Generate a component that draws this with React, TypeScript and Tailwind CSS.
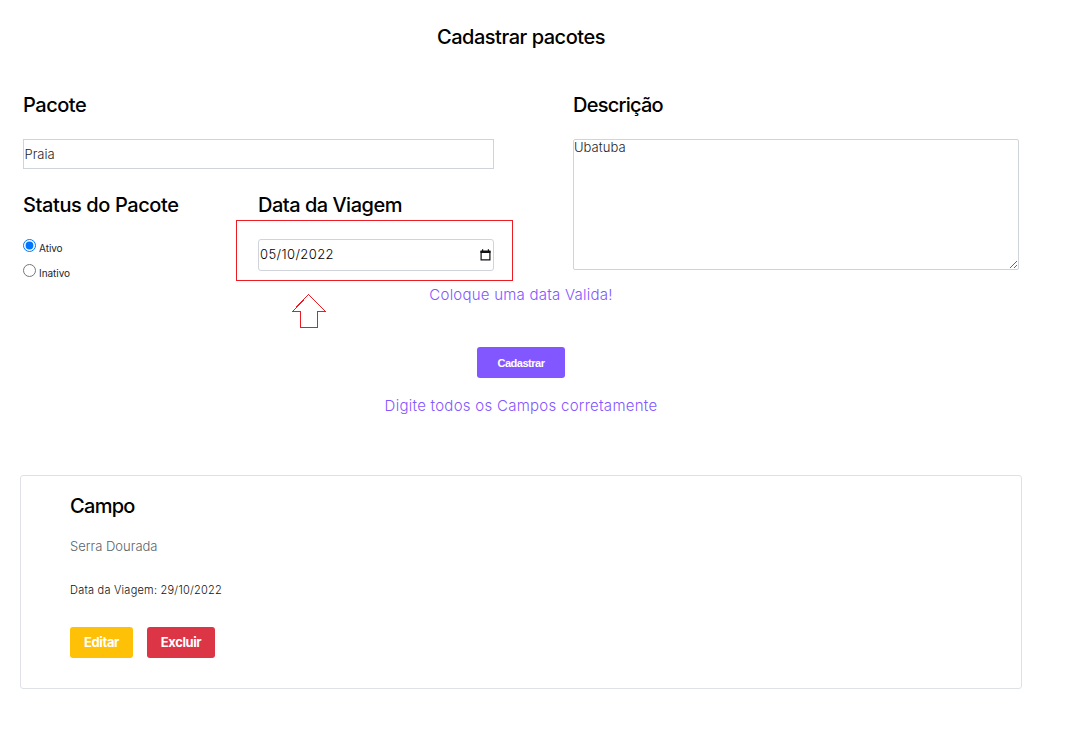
import React from "react";

function Heading({ children, className = "tracking-[-0.47px]" }: { children: React.ReactNode; className?: string }) {
  return (
    <h2 className={`h-[30px] whitespace-nowrap text-[20px] font-medium leading-[30px] text-black ${className}`}>
      {children}
    </h2>
  );
}

function StatusOption({ label, checked }: { label: string; checked?: boolean }) {
  return (
    <label className="flex h-[25px] items-start text-[10px] leading-[18px] text-[#212529]">
      <input
        type="radio"
        name="status"
        defaultChecked={checked}
        className="m-0 mr-[3px] h-[13px] w-[13px] shrink-0"
      />
      <span className="tracking-[-0.05px]">{label}</span>
    </label>
  );
}

function DateField() {
  return (
    <div className="relative mt-[19px] flex h-[32px] w-[236px] items-center justify-between rounded-[3px] border border-[#ced4da] pl-[1px] pr-[2px] text-[13px] text-black">
      <span className="font-light tracking-[0.4px]">05/10/2022</span>
      <svg width="11" height="12" viewBox="0 0 11 12" fill="none">
        <path d="M1.1 2.5h8.8v8.4H1.1z" stroke="#111" strokeWidth="1.2" />
        <path d="M0.5 1.5h10v2.6h-10zM2 0.3h1.2v1.4H2zM7.8 0.3H9v1.4H7.8z" fill="#111" />
      </svg>
      <div className="pointer-events-none absolute -left-[23px] -top-[20px] h-[61px] w-[277px] border border-[#ed1c24]" />
      <svg
        className="absolute left-[32px] top-[53px]"
        width="36"
        height="36"
        viewBox="0 0 36 36"
        fill="none"
        shapeRendering="crispEdges"
      >
        <path d="M17.5 1.5L34.5 18.5H26.5V34.5H9.5V18.5H1.5Z" stroke="#ed1c24" />
      </svg>
    </div>
  );
}

export default function App() {
  return (
    <main className="h-[732px] w-[1066px] overflow-hidden bg-white pl-[20px] pt-[22px] font-['Inter',sans-serif]">
      <div className="w-[1002px]">
        <div className="flex justify-center">
          <Heading>Cadastrar pacotes</Heading>
        </div>
        <form className="mt-[38px]">
          <div className="flex h-[195px] pl-[3px]">
            <div className="w-[550px]">
              <Heading>Pacote</Heading>
              <input
                type="text"
                defaultValue="Praia"
                className="mt-[19px] block h-[30px] w-[471px] border border-[#ced4da] px-[0.5px] text-[13px] font-light text-[#212529] outline-none"
              />
              <div className="mt-[21px] flex">
                <div className="w-[235px]">
                  <Heading className="tracking-[-0.4px]">Status do Pacote</Heading>
                  <div className="mt-[19px]">
                    <StatusOption label="Ativo" checked />
                    <StatusOption label="Inativo" />
                  </div>
                </div>
                <div>
                  <Heading className="tracking-[-0.5px]">Data da Viagem</Heading>
                  <DateField />
                </div>
              </div>
            </div>
            <div>
              <Heading className="tracking-[-0.75px]">Descrição</Heading>
              <textarea
                defaultValue="Ubatuba"
                className="mt-[19px] block h-[131px] w-[446px] resize rounded-[2px] border border-[#ced4da] text-[13px] font-light leading-[15px] tracking-[0.05px] text-[#212529] outline-none"
              />
            </div>
          </div>
          <div className="flex flex-col items-center text-[15px] leading-[20px] text-[#8257ff]">
            <p className="font-light tracking-[0.23px]">Coloque uma data Valida!</p>
            <button
              type="button"
              className="mt-[42px] h-[31px] w-[88px] rounded-[3px] bg-[#8257ff] font-['Liberation_Sans',sans-serif] text-[11px] font-bold tracking-[-0.5px] text-white"
            >
              Cadastrar
            </button>
            <p className="mt-[18px] font-light tracking-[0.27px]">Digite todos os Campos corretamente</p>
          </div>
        </form>
        <section className="mt-[59px] h-[214px] rounded-[3px] border border-[#dee2e6] pl-[49px] pt-[15px]">
          <Heading className="tracking-[-0.7px]">Campo</Heading>
          <p className="mt-[15px] text-[13px] font-light leading-[20px] text-[#59636b]">Serra Dourada</p>
          <p className="mt-[24px] text-[11px] font-light leading-[20px] tracking-[0.22px] text-[#111]">Data da Viagem: 29/10/2022</p>
          <div className="mt-[27px] flex gap-[14px] text-[13px] font-bold tracking-[-0.4px] text-white">
            <button type="button" className="h-[31px] w-[63px] rounded-[3px] bg-[#ffc107]">
              Editar
            </button>
            <button type="button" className="h-[31px] w-[68px] rounded-[3px] bg-[#dc3545]">
              Excluir
            </button>
          </div>
        </section>
      </div>
    </main>
  );
}
